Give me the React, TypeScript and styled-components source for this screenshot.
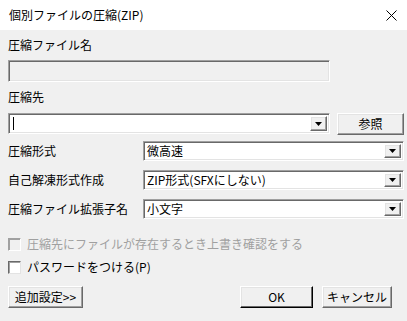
import React from "react"
import styled, { createGlobalStyle, css } from "styled-components"

const GlobalStyle = createGlobalStyle`
  html, body {
    margin: 0;
    padding: 0;
    background: #f0f0f0;
  }
  body {
    font-family: "Noto Sans CJK JP", "Noto Sans", sans-serif;
    font-size: 12px;
    color: #000;
  }
`

const Window = styled.div`
  width: 407px;
  height: 321px;
  display: flex;
  flex-direction: column;
  overflow: hidden;
`

const TitleBar = styled.div`
  height: 30px;
  flex: none;
  background: #fff;
  display: flex;
  align-items: center;
  justify-content: space-between;
  padding: 0 10px 0 9px;
`

const TitleText = styled.span`
  font-size: 12px;
  line-height: 14px;
  color: #000;
`

const Body = styled.div`
  flex: 1;
  background: #f0f0f0;
  padding: 8px 3px 0 8px;
  display: flex;
  flex-direction: column;
`

const Label = styled.div<{ $top?: number }>`
  line-height: 14px;
  height: 14px;
  margin-top: ${(p) => p.$top ?? 0}px;
  white-space: nowrap;
`

const sunken = css`
  box-sizing: border-box;
  border-style: solid;
  border-width: 1px;
  border-color: #a0a0a0 #fff #fff #a0a0a0;
  box-shadow: inset 1px 1px 0 #696969, inset -1px -1px 0 #e3e3e3;
`

const raised = css`
  box-sizing: border-box;
  background: #f0f0f0;
  border-style: solid;
  border-width: 1px;
  border-color: #fff #696969 #696969 #fff;
  box-shadow: inset -1px -1px 0 #a0a0a0, inset 1px 1px 0 #e3e3e3;
`

const DisabledInput = styled.div`
  ${sunken};
  width: 322px;
  height: 22px;
  margin-top: 8px;
  background: #f0f0f0;
`

const PathRow = styled.div`
  display: flex;
  align-items: flex-start;
  margin-top: 9px;
  gap: 7px;
`

const Combo = styled.div<{ $w: number; $h: number }>`
  ${sunken};
  width: ${(p) => p.$w}px;
  height: ${(p) => p.$h}px;
  background: #fff;
  display: flex;
  align-items: center;
  padding: 2px;
`

const ComboText = styled.span`
  flex: 1;
  padding-left: 1px;
  line-height: 14px;
  white-space: nowrap;
`

const Caret = styled.span`
  width: 1px;
  height: 13px;
  background: #000;
  margin-left: 2px;
`

const ArrowButton = styled.div`
  ${raised};
  width: 17px;
  height: 100%;
  flex: none;
  display: flex;
  align-items: center;
  justify-content: center;
`

const PushButton = styled.div<{ $w: number; $default?: boolean; $left?: number }>`
  ${raised};
  width: ${(p) => p.$w}px;
  height: 22px;
  margin-left: ${(p) => p.$left ?? 0}px;
  display: flex;
  align-items: center;
  justify-content: center;
  line-height: 14px;
  white-space: nowrap;
  ${(p) =>
    p.$default &&
    css`
      border-color: #fff #000 #000 #fff;
      box-shadow: inset -1px -1px 0 #696969, inset 1px 1px 0 #e3e3e3;
    `}
`

const Grid = styled.div`
  display: grid;
  grid-template-columns: 135px 261px;
  grid-auto-rows: 20px;
  row-gap: 9px;
  align-items: center;
  margin-top: 6px;
`

const CheckRow = styled.label<{ $disabled?: boolean; $top: number }>`
  display: flex;
  align-items: center;
  gap: 6px;
  height: 14px;
  margin-top: ${(p) => p.$top}px;
  line-height: 14px;
  color: ${(p) => (p.$disabled ? "#a0a0a0" : "#000")};
`

const CheckBox = styled.span<{ $disabled?: boolean }>`
  box-sizing: border-box;
  width: 13px;
  height: 13px;
  flex: none;
  background: ${(p) => (p.$disabled ? "#f0f0f0" : "#fff")};
  border-style: solid;
  border-width: 1px;
  border-color: ${(p) =>
    p.$disabled ? "#a0a0a0 #fff #fff #a0a0a0" : "#696969 #e3e3e3 #e3e3e3 #696969"};
  box-shadow: inset 1px 1px 0 #a0a0a0;
`

const ButtonBar = styled.div`
  display: flex;
  align-items: center;
  margin-top: 12px;
  padding-right: 12px;
`

const Spacer = styled.div`
  flex: 1;
`

const DownArrow = () => (
  <svg width="7" height="4" viewBox="0 0 7 4">
    <path d="M0 0h7L3.5 4z" fill="#000" />
  </svg>
)

const CloseIcon = () => (
  <svg width="11" height="11" viewBox="0 0 11 11">
    <path d="M0.5 0.5L10.5 10.5M10.5 0.5L0.5 10.5" stroke="#000" strokeWidth="1" />
  </svg>
)

const options = [
  { label: "圧縮形式", value: "微高速" },
  { label: "自己解凍形式作成", value: "ZIP形式(SFXにしない)" },
  { label: "圧縮ファイル拡張子名", value: "小文字" },
]

const App = () => {
  return (
    <>
      <GlobalStyle />
      <Window>
        <TitleBar>
          <TitleText>個別ファイルの圧縮(ZIP)</TitleText>
          <CloseIcon />
        </TitleBar>
        <Body>
          <Label>圧縮ファイル名</Label>
          <DisabledInput />
          <Label $top={8}>圧縮先</Label>
          <PathRow>
            <Combo $w={323} $h={21}>
              <Caret />
              <ComboText />
              <ArrowButton>
                <DownArrow />
              </ArrowButton>
            </Combo>
            <PushButton $w={67}>参照</PushButton>
          </PathRow>
          <Grid>
            {options.map((o) => (
              <React.Fragment key={o.label}>
                <Label>{o.label}</Label>
                <Combo $w={261} $h={20}>
                  <ComboText>{o.value}</ComboText>
                  <ArrowButton>
                    <DownArrow />
                  </ArrowButton>
                </Combo>
              </React.Fragment>
            ))}
          </Grid>
          <CheckRow $disabled $top={18}>
            <CheckBox $disabled />
            圧縮先にファイルが存在するとき上書き確認をする
          </CheckRow>
          <CheckRow $top={9}>
            <CheckBox />
            パスワードをつける(P)
          </CheckRow>
          <ButtonBar>
            <PushButton $w={75}>追加設定&gt;&gt;</PushButton>
            <Spacer />
            <PushButton $w={73} $default>
              OK
            </PushButton>
            <PushButton $w={70} $left={9}>
              キャンセル
            </PushButton>
          </ButtonBar>
        </Body>
      </Window>
    </>
  )
}

export default App
